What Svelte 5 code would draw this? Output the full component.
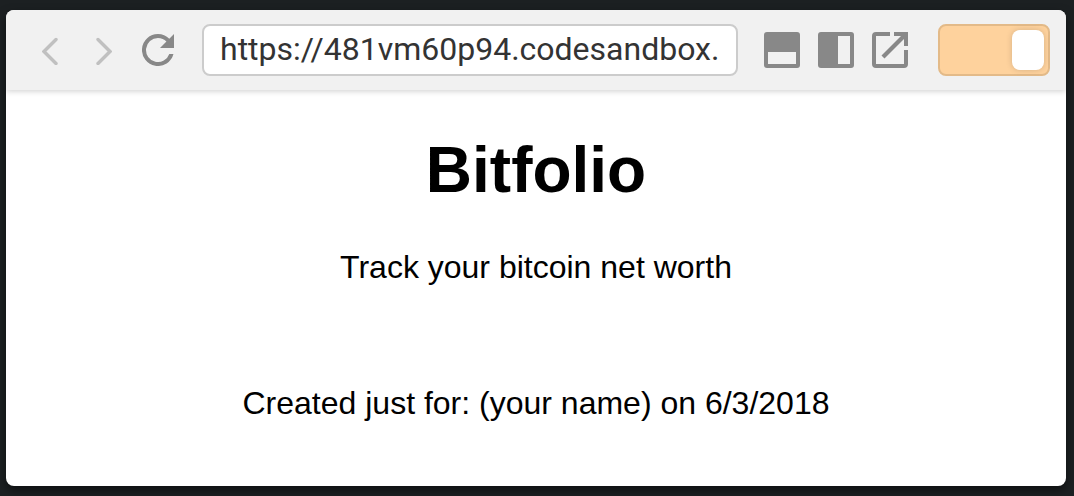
<script>
  let expanded = $state(true);
  let address = $state('https://481vm60p94.codesandbox.io/');
</script>

<div class="frame">
  <div class="browser">
    <header>
      <nav>
        <button aria-label="Back"><svg width="16" height="30" viewBox="0 0 16 30"><path d="M14 5 2 17l12 12" transform="translate(0 -.5)" fill="none" stroke="#c0c0c0" stroke-width="3.4" stroke-linecap="round"/></svg></button>
        <button aria-label="Forward" class="forward"><svg width="16" height="30" viewBox="0 0 16 30"><path d="m2 4.500 12 12-12 12" fill="none" stroke="#c0c0c0" stroke-width="3.4" stroke-linecap="round"/></svg></button>
        <button aria-label="Refresh"><svg width="32" height="32" viewBox="4 4 16 16"><path fill="#888" d="M17.65 6.35A7.96 7.96 0 0 0 12 4a8 8 0 1 0 7.73 10h-2.08A6 6 0 1 1 12 6c1.66 0 3.14.69 4.22 1.78L13 11h7V4z"/></svg></button>
      </nav>
      <input class="address" aria-label="Address" bind:value={address} />
      <div class="tools">
        <button aria-label="Split horizontally"><svg width="36" height="36" viewBox="0 0 36 36"><rect width="36" height="36" rx="3" fill="#888"/><path fill="#f1f1f1" d="M4 20h28v12H4z"/></svg></button>
        <button aria-label="Split vertically"><svg width="36" height="36" viewBox="0 0 36 36"><rect width="36" height="36" rx="3" fill="#888"/><path fill="#f1f1f1" d="M20 4h12v28H20z"/></svg></button>
        <button aria-label="Open in new window"><svg width="36" height="36" viewBox="0 0 36 36"><path fill="#888" d="M18 0v4H4v28h28V18h4v14a4 4 0 0 1-4 4H4a4 4 0 0 1-4-4V4a4 4 0 0 1 4-4zM22 0h14v14h-4V7L12.500 26.500l-3-3L29 4h-7z"/></svg></button>
      </div>
      <input class="toggle" type="checkbox" aria-label="Preview" bind:checked={expanded} />
    </header>
    <main>
      <h1>Bitfolio</h1>
      <p>Track your bitcoin net worth</p>
      <p class="credit">Created just for: (your name) on 6/3/2018</p>
    </main>
  </div>
</div>

<style>
  :global(body) { margin: 0; background: #1c2022; }
  .frame { min-height: 100vh; box-sizing: border-box; padding: 10px 8px 10px 6px; display: flex; }
  .browser { flex: 1; min-width: 0; background: #fff; border-radius: 8px; overflow: hidden; box-shadow: 0 4px 10px rgba(0,0,0,.5); }
  header { display: flex; align-items: center; box-sizing: border-box; height: 80px; padding: 0 16px 0 36px; background: #f1f1f1; box-shadow: 0 1px 6px rgba(0,0,0,.2); }
  button { display: block; padding: 0; border: 0; background: none; }
  svg { display: block; }
  nav { display: flex; align-items: center; margin-right: 28px; }
  .forward { margin: 0 30px 0 38px; }
  .address { flex: 1; min-width: 0; box-sizing: border-box; height: 52px; padding: 0 16px 2px; border: 2px solid #ccc; border-radius: 8px; background: #fff; color: #333; font: 32px/46px Roboto, sans-serif; }
  .tools { display: flex; gap: 18px; margin: 0 30px 0 26px; }
  .toggle { appearance: none; box-sizing: border-box; display: flex; justify-content: flex-end; width: 112px; height: 52px; margin: 0; padding: 4px; border: 2px solid #e3ba88; border-radius: 8px; background: #fed29d; }
  .toggle::before { content: ""; width: 32px; height: 40px; border-radius: 8px; background: #fff; box-shadow: 0 0 6px rgba(0,0,0,.16); }
  .toggle:not(:checked) { justify-content: flex-start; }
  main { padding: 43px 16px 0; text-align: center; color: #000; font: 32px/36px "Liberation Sans", Arial, sans-serif; }
  h1 { margin: 0; font-size: 64px; line-height: 74px; }
  p { margin: 42px 0 0; }
  .credit { margin-top: 100px; }
</style>
